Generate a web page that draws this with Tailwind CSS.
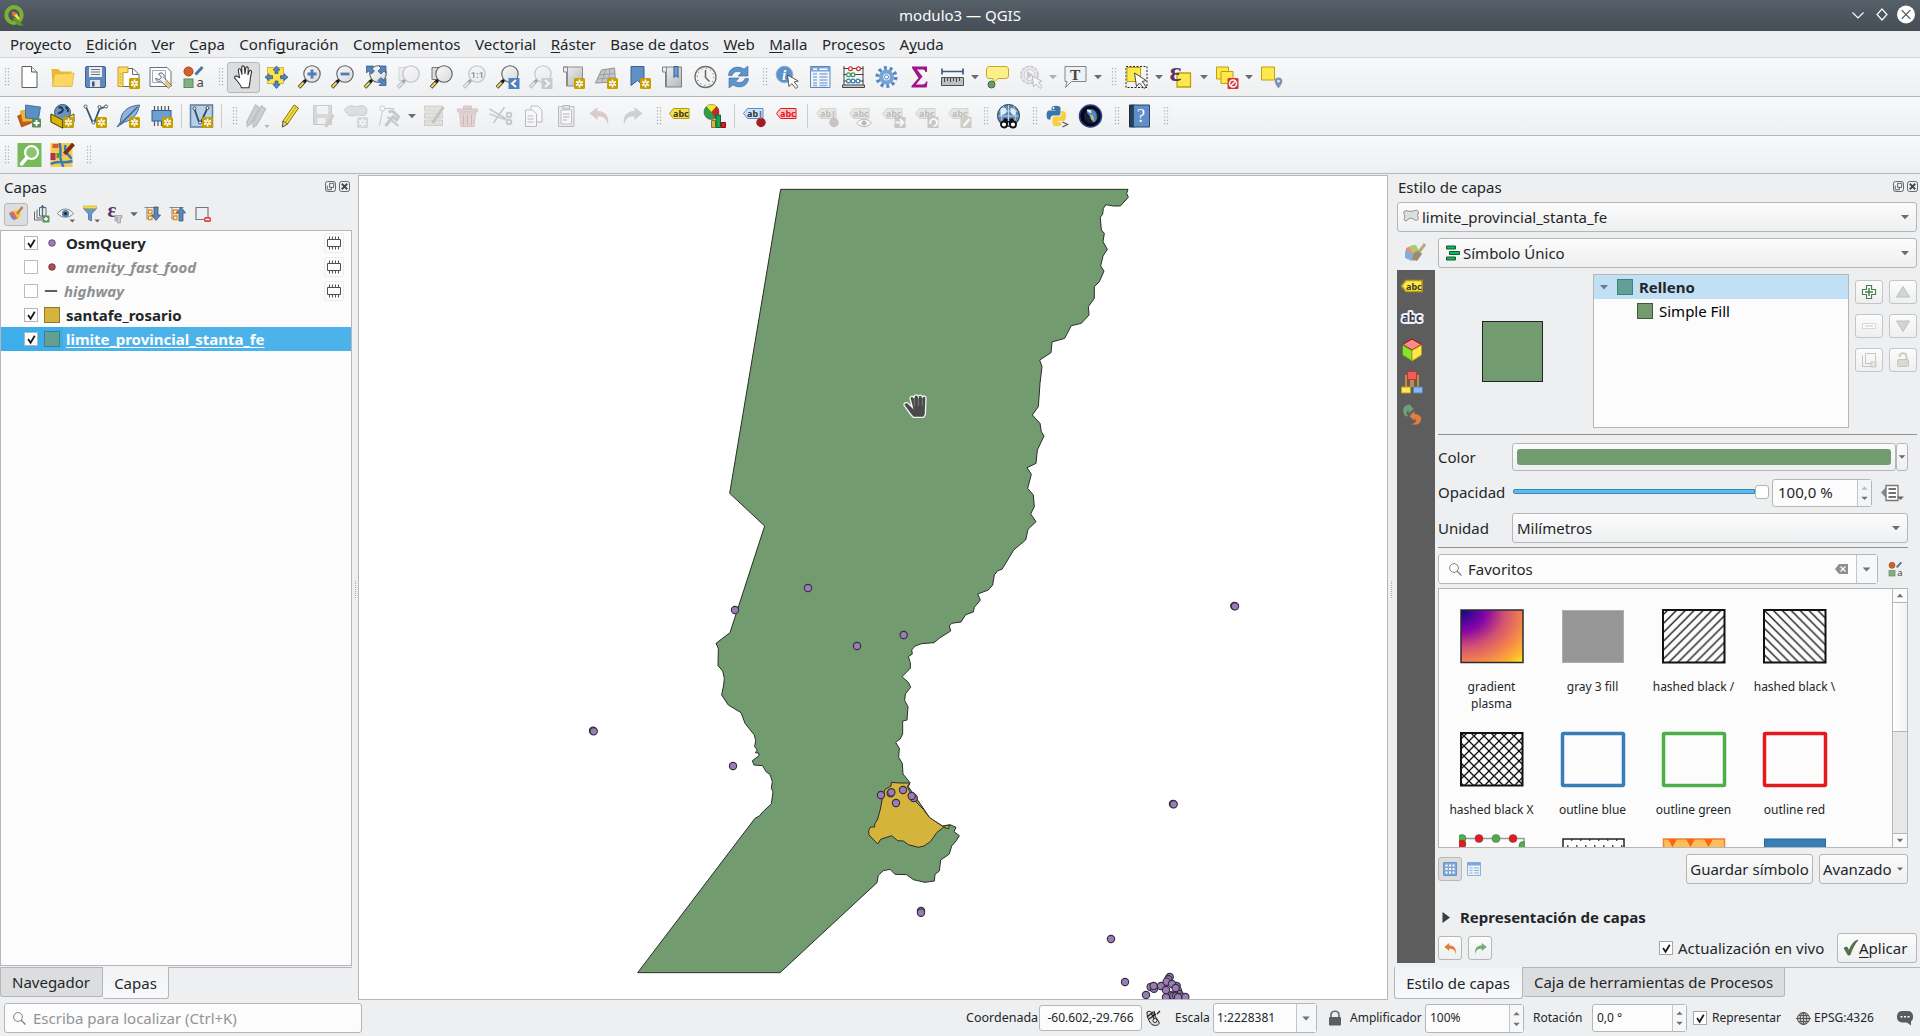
<!DOCTYPE html>
<html lang="es">
<head>
<meta charset="utf-8">
<title>modulo3 — QGIS</title>
<script src="https://cdn.jsdelivr.net/npm/@tailwindcss/browser@4"></script>
</head>
<body class="relative w-[1920px] h-[1036px] overflow-hidden flex flex-col bg-[#eeeff1] text-[#232629] text-[15px] leading-none font-['Noto_Sans',sans-serif] whitespace-nowrap">

<!-- shared glyphs -->
<svg class="absolute w-0 h-0">
  <defs>
    <linearGradient id="lens" x1="0" y1="0" x2="1" y2="1"><stop offset="0" stop-color="#fafafa"/><stop offset="1" stop-color="#d5d8da"/></linearGradient>
    <linearGradient id="page" x1="0" y1="0" x2="1" y2="1"><stop offset="0" stop-color="#f4f4f4"/><stop offset="1" stop-color="#b4b6b7"/></linearGradient>
    <radialGradient id="plasma" cx="0" cy="0" r="1.42"><stop offset="0" stop-color="#0d0887"/><stop offset=".28" stop-color="#8405a7"/><stop offset=".5" stop-color="#d35171"/><stop offset=".72" stop-color="#f48849"/><stop offset=".88" stop-color="#feb72d"/><stop offset="1" stop-color="#f0f921"/></radialGradient>
    <symbol id="grip" viewBox="0 0 16 24"><path d="M8.500 3v18M11.500 3v18" stroke="#a9abad" stroke-width="1.200" stroke-dasharray="1.200 2"/></symbol>
    <symbol id="down" viewBox="0 0 12 24"><path d="M2 10h8l-4 4.200z" fill="#6a6c6e"/></symbol>
    <symbol id="vline" viewBox="0 0 7 24"><path d="M3.500 0v24" stroke="#c9cbcc"/></symbol>
    <symbol id="new" viewBox="0 0 24 24"><rect x="12.500" y="13" width="11" height="11" rx="1.500" fill="#c4a000"/><path d="M18 14.600v7.800M14.600 16.500l6.800 4M14.600 20.500l6.800-4" stroke="#fff" stroke-width="1.700"/><circle cx="18" cy="18.500" r="1.100" fill="#c4a000"/></symbol>
    <symbol id="mag" viewBox="0 0 24 24"><path d="M7.500 16 1.500 22.500" stroke="#3a3a3a" stroke-width="3.600"/><path d="M6 17.600 1.800 22.200" stroke="#fcd94f" stroke-width="2"/><path d="M9 14.500 7 16.500" stroke="#111" stroke-width="3"/><circle cx="14.500" cy="9" r="8.200" fill="url(#lens)" stroke="#5a5c5d" stroke-width="1.100"/></symbol>
    <symbol id="tag" viewBox="0 0 24 24"><path d="M2 8.500 6 3.500H21.500V13.500H6z"/></symbol>
    <symbol id="chip" viewBox="0 0 20 20"><path d="M3.500 6.500h13v7h-13zM5.500 3.500v3M8.500 3.500v3M11.500 3.500v3M14.500 3.500v3M5.500 13.500v3M8.500 13.500v3M11.500 13.500v3M14.500 13.500v3" fill="none" stroke="#4d4f51"/></symbol>
    <symbol id="tick" viewBox="0 0 14 14"><path d="M3.300 6.500 6 10.500 10.500 3" fill="none" stroke="#17191b" stroke-width="1.900"/></symbol>
    <symbol id="styles" viewBox="0 0 24 24"><circle cx="6" cy="6.500" r="4.500" fill="#d2602d" stroke="#a54416"/><path d="M13 9.500 20 2" stroke="#47779f" stroke-width="3"/><rect x="1.500" y="14" width="9" height="8.500" fill="#82b085" stroke="#5c8a60"/></symbol>
    <symbol id="float" viewBox="0 0 12 12"><rect x=".5" y=".5" width="11" height="11" rx="2.500" fill="none" stroke="#56595b"/><path d="M5 2.500h4.500V7H5zM2.500 5v4.500H7V7" fill="none" stroke="#56595b"/></symbol>
    <symbol id="close" viewBox="0 0 12 12"><rect x=".5" y=".5" width="11" height="11" rx="2.500" fill="none" stroke="#56595b"/><path d="m3 3 6 6M9 3l-6 6" stroke="#46494b" stroke-width="2"/></symbol>
    <symbol id="undo" viewBox="0 0 24 24"><path d="M2 9.500 10 3v4c7 0 12 4 10.500 14C19 14 16 12.500 10 12.500V16z"/></symbol>
  </defs>
</svg>

<!-- title bar -->
<header class="h-[31px] shrink-0 flex items-center justify-between bg-linear-to-b from-[#566069] to-[#454d55] text-[#fcfcfc]">
  <svg class="w-[74px] h-[22px]" viewBox="0 0 74 22"><ellipse cx="14" cy="10" rx="7.700" ry="8" fill="none" stroke="#7cb032" stroke-width="4"/><path d="m15 12 8.500 8.500h-5L12.500 14z" fill="#5f9a2a"/><path d="m12 6.500 5 1.500-.5 4.500-4-1.500z" fill="#ee7c30"/><path d="m14.500 10.500 2.500-1.500 3 5-2.500.5z" fill="#f3e25b"/></svg>
  <div class="text-[15px]">modulo3 — QGIS</div>
  <svg class="w-[74px] h-[24px] -mt-px" viewBox="0 0 74 24" fill="none" stroke="#fcfcfc" stroke-width="1.200"><path d="m6.500 9.500 5.500 5.500 5.500-5.500M36 6l5 5.500-5 5.500-5-5.500z"/><circle cx="60" cy="11.500" r="9" fill="#fff" stroke="none"/><path d="m55.700 7.200 8.600 8.600M64.300 7.200l-8.600 8.600" stroke="#475057"/></svg>
</header>

<!-- menu bar -->
<nav class="h-[27px] shrink-0 flex items-center gap-[14.500px] pl-[10px] border-b border-[#d3d5d7] [&_u]:underline [&_u]:decoration-1 [&_u]:underline-offset-[2px] [&_u]:[text-decoration-skip-ink:none]">
  <span>Pro<u>y</u>ecto</span><span><u>E</u>dición</span><span><u>V</u>er</span><span><u>C</u>apa</span><span>Confi<u>g</u>uración</span><span>Co<u>m</u>plementos</span><span>Vect<u>o</u>rial</span><span><u>R</u>áster</span><span>Base de <u>d</u>atos</span><span><u>W</u>eb</span><span><u>M</u>alla</span><span>Pro<u>c</u>esos</span><span>A<u>y</u>uda</span>
</nav>

<!-- toolbar 1 -->
<div class="h-[39px] shrink-0 flex items-center border-b border-[#b4b6b9] bg-linear-to-b from-[#f8f9fb] to-[#eeeff1] [&>svg]:h-[24px] [&>svg]:w-[33px] [&>svg]:shrink-0 [&>svg]:overflow-visible">
  <svg class="-ml-[3px] max-w-[16px]" viewBox="0 0 16 24"><use href="#grip"/></svg>
  <svg viewBox="0 0 24 24"><path d="M4.500 1.500h9.500l5.500 5.500v15.500h-15z" fill="#fff" stroke="#5a5c5d"/><path d="M14 1.500V7h5.500" fill="#eee" stroke="#5a5c5d"/></svg>
  <svg viewBox="0 0 24 24"><path d="M1 4h7l2 2.500h11V21H2z" fill="#e8b83a"/><path d="m4 9 19.500-1-2 13.500H2z" fill="#fbd75f" stroke="#dcae3c" stroke-width=".7"/></svg>
  <svg viewBox="0 0 24 24"><rect x="2" y="1.500" width="20" height="21" rx="1.500" fill="#5f8abf" stroke="#3f5f8c"/><path d="M5.500 2h13v10h-13z" fill="#eceeef"/><path d="M7.500 4.500h9M7.500 7h9M7.500 9.500h9" stroke="#777"/><path d="M6.500 15h10v7h-10z" fill="#e4e5e6"/><path d="M8.500 16.500h2.500v5H8.500z" fill="#38557e"/></svg>
  <svg viewBox="0 0 24 24"><path d="M5.500 3.500h11l6 6v12h-17z" fill="#fff" stroke="#666"/><path d="M1.500 2h10v5.500h-5v14h-5z" fill="#f8dc6a" stroke="#c7a21b"/><path d="M16 3.500V9.500h6" fill="none" stroke="#666"/><path d="M3 9h2M3 12h2M3 15h2M3 18h2" stroke="#c7a21b"/><use href="#new"/></svg>
  <svg viewBox="0 0 24 24"><path d="M.5 2.500h17l4 4v15H.5z" fill="#fff" stroke="#6c6e70"/><path d="M3 5.500h13v12H3z" fill="none" stroke="#8fb2d8"/><path d="m9 9 3 3-2 2.500-4-1c1 3 3 3.500 5 2.500l8 7 3-2.500-7.500-8c1-2.500-1-5-4-4.500z" fill="#eee" stroke="#555" stroke-width=".9"/><path d="m15.500 16.500 5 5.500" stroke="#e8c64a" stroke-width="2.200"/></svg>
  <svg viewBox="0 0 24 24"><use href="#styles"/><text x="14" y="22" font-size="13" fill="#444">a</text></svg>
  <svg class="max-w-[16px]" viewBox="0 0 16 24"><use href="#grip"/></svg>
  <div class="w-[33px] h-[31px] rounded-[3px] border border-[#b6b8ba] bg-[#dcddde] flex items-center justify-center shrink-0"><svg class="size-[24px]" viewBox="0 0 24 24"><path d="M7.500 12.500 6.300 5.500c-.3-2 2-2.400 2.500-.6L10 9.500 9.700 2.500c0-2.200 2.500-2.200 2.700 0l.6 6.500.7-5.800c.4-2 2.700-1.600 2.500.4L15.900 10l1.200-3.600c.8-1.700 2.800-.9 2.400.8-.9 3.600-1.200 5.600-1.500 9.300-.3 3-.9 4-1 6.300H9.500c-.7-3.300-4.500-7-6.700-9.600-1-1.700 1-3 2.500-1.700z" fill="#fff" stroke="#333" stroke-width="1.100"/></svg></div>
  <svg viewBox="0 0 24 24"><rect x="3" y="2.500" width="16" height="16" fill="#fbe54d" stroke="#bfa21b" stroke-width=".7"/><path d="M12 1 8.500 5h2v3.500h3V5h2zM12 23.500l-3.500-4h2V16h3v3.500h2zM.5 12.200l4-3.500v2H8v3H4.500v2zM23.500 12.200l-4-3.500v2H16v3h3.500v2z" fill="#5485be" stroke="#2d527f" stroke-width=".7"/></svg>
  <svg viewBox="0 0 24 24"><use href="#mag"/><path d="M14.500 4.500v9M10 9h9" stroke="#4f7db5" stroke-width="2.800"/></svg>
  <svg viewBox="0 0 24 24"><use href="#mag"/><path d="M10 9h9" stroke="#4f7db5" stroke-width="2.800"/></svg>
  <svg viewBox="0 0 24 24"><use href="#mag"/><path d="M3 1h7L8 3l3 3-3 3-3-3-2 2zM22.500 1v7l-2-2-3 3-3-3 3-3-2-2zM22.500 20.500h-7l2-2-3-3 3-3 3 3 2-2z" fill="#5485be" stroke="#2d527f" stroke-width=".7"/></svg>
  <svg class="opacity-35 grayscale" viewBox="0 0 24 24"><path d="M2.500 2.500h10v13h-10z" fill="#e5dfa8" stroke="#999"/><use href="#mag"/></svg>
  <svg viewBox="0 0 24 24"><path d="M2.500 2.500h12v12h-12z" fill="#ddd" stroke="#777"/><use href="#mag"/></svg>
  <svg class="opacity-35 grayscale" viewBox="0 0 24 24"><use href="#mag"/><text x="8" y="12.500" font-size="9.500" font-weight="700">1:1</text></svg>
  <svg viewBox="0 0 24 24"><use href="#mag"/><path d="M13 13h11v11H13z" fill="#4f81bd"/><path d="m20.500 15-4 3.500 4 3.500" fill="none" stroke="#fff" stroke-width="2"/></svg>
  <svg class="opacity-35 grayscale" viewBox="0 0 24 24"><use href="#mag"/><path d="M13 13h11v11H13z" fill="#7d7f80"/><path d="m16.500 15 4 3.500-4 3.500" fill="none" stroke="#fff" stroke-width="2"/></svg>
  <svg viewBox="0 0 24 24"><path d="M2 2h19v19H5V7H2z" fill="url(#page)" stroke="#8a8c8d"/><path d="M2 2h4v19" fill="none" stroke="#8a8c8d"/><use href="#new"/></svg>
  <svg viewBox="0 0 24 24"><path d="m7 5 13-2 1 14-20 1z" fill="#c5c6c7" stroke="#8f9192"/><path d="M5 10l15.500-1.500M3 14l17.500-1.500M11 4.500 7.500 17.500M15.500 4l-1.500 13" stroke="#9c9e9f" fill="none"/><use href="#new"/></svg>
  <svg viewBox="0 0 24 24"><path d="M3.500 1.500h13v20L10 15.500l-6.500 5z" fill="#5f8fc6" stroke="#39618f"/><use href="#new"/></svg>
  <svg viewBox="0 0 24 24"><path d="M2 2h19v20H5V7H2z" fill="url(#page)" stroke="#7c7e80"/><path d="M6 2v20" stroke="#8a8c8d"/><path d="M13.500 1.500h4v11l-2-2-2 2z" fill="#6aa0d8" stroke="#2f5d91"/></svg>
  <svg viewBox="0 0 24 24"><circle cx="12" cy="12" r="10.500" fill="#f3f3f3" stroke="#6d6f70" stroke-width="1.300"/><circle cx="12" cy="12" r="8.300" fill="none" stroke="#555" stroke-dasharray="1 3.350"/><path d="M12 5v7.500l4 4" fill="none" stroke="#666" stroke-width="1.500"/></svg>
  <svg viewBox="0 0 24 24"><path d="M2 10.500C2.500 2.500 11 0 17.500 4L21.500 1v10h-10l3.500-3.500C11 5.500 7 6.500 5.500 10.500zM22 13.500c-.5 8-9 10.500-15.500 6.500L2.500 23V13h10L9 16.500c4 2 8 1 9.500-3z" fill="#5f93c9" stroke="#3c6ca1" stroke-width=".6"/></svg>
  <svg class="max-w-[16px]" viewBox="0 0 16 24"><use href="#grip"/></svg>
  <svg viewBox="0 0 24 24"><circle cx="9" cy="9.500" r="8.300" fill="#5c92ca" stroke="#8fb0d3"/><text x="6.500" y="15" font-size="15" font-style="italic" font-weight="700" font-family="Liberation Serif" fill="#fff">i</text><path d="m12 10 1.500 11.500 2.800-3 4 5 2.200-1.800-3.800-4.700 4-1z" fill="#fff" stroke="#444" stroke-width=".9"/></svg>
  <svg viewBox="0 0 24 24"><path d="M2 1.500h19.500v21H2z" fill="#eef4fb" stroke="#5d86b5"/><path d="M2 2h19.500v4.500H2z" fill="#7ba5d6"/><path d="M4.500 4.200h4M11 4.200h8" stroke="#fff" stroke-width="1.500"/><path d="M4.500 9h4M4.500 12h4M4.500 15h4M4.500 18h4M4.500 20.500h4M11 9h8M11 12h8M11 15h8M11 18h8M11 20.500h8" stroke="#8fb0d8" stroke-width="1.300"/></svg>
  <svg viewBox="0 0 24 24"><path d="M2.500 1v19M21.500 1v19M2 3.500h20M2 9.500h20M2 16h20" stroke="#444" fill="none"/><path d="M1 20h22v2.500H1z" fill="#ccc" stroke="#444"/><g fill="#fff" stroke-width="1.200"><g stroke="#c33"><circle cx="9" cy="3.800" r="1.900"/><circle cx="17" cy="3.800" r="1.900"/></g><g stroke="#3a9a4a"><circle cx="7" cy="9.700" r="1.900"/><circle cx="11.500" cy="9.700" r="1.900"/></g><g stroke="#357ab5"><circle cx="7" cy="16" r="1.900"/><circle cx="11.500" cy="16" r="1.900"/><circle cx="16.500" cy="16" r="1.900"/></g></g></svg>
  <svg viewBox="0 0 24 24"><circle cx="12" cy="12" r="9" fill="none" stroke="#5586c0" stroke-width="4" stroke-dasharray="2.830 2.830"/><circle cx="12" cy="12" r="5.500" fill="#dbe8f5" stroke="#76a3d6" stroke-width="4"/><circle cx="12" cy="12" r="2" fill="#fff" stroke="#5586c0"/></svg>
  <svg viewBox="0 0 24 24"><path d="M4.500 1.500h15V7H18c-.6-2-1.500-2.500-4-2.500H9.500l5.500 7-6.500 8h6c2.500 0 3.500-.7 4-3H20l-.8 6H4v-1.500L11 13 4.500 3z" fill="#a0148c"/></svg>
  <svg viewBox="0 0 24 24"><path d="M1.500 6.500h21M1.500 3.500v6M22.500 3.500v6" stroke="#3d5c7c" stroke-width="1.700"/><path d="M1 12.500h22v8H1z" fill="#bcbec0" stroke="#4e5052"/><path d="M4 13v4M7 13v3M10 13v4M13 13v3M16 13v4M19 13v3" stroke="#444"/></svg>
  <svg class="max-w-[12px]" viewBox="0 0 12 24"><use href="#down"/></svg>
  <svg viewBox="0 0 24 24"><path d="M4.500 1.500h15c3 0 3.500 1 3.500 3.500v5c0 3-1 3.500-3.500 3.500h-7L8 18l-.5-4.500h-3c-3 0-3.500-1-3.500-3.500V5c0-2.500 1-3.500 3.500-3.500z" fill="#fcee88" stroke="#c6a72b"/><circle cx="6" cy="19.500" r="3.500" fill="#6b9a6d" stroke="#3f6b41"/></svg>
  <svg class="opacity-35 grayscale" viewBox="0 0 24 24"><circle cx="11" cy="10" r="8.500" fill="#ddd" stroke="#888" stroke-width="2" stroke-dasharray="3.500 1"/><circle cx="11" cy="10" r="5.500" fill="#eee" stroke="#777"/><path d="m8.500 6 6 4-6 4z" fill="#777"/><path d="m14 11 1 11 2.500-3 4 4.500 2-1.500-3.500-4.700 3.500-.8z" fill="#fff" stroke="#555"/></svg>
  <svg class="max-w-[12px] opacity-50" viewBox="0 0 12 24"><use href="#down"/></svg>
  <svg viewBox="0 0 24 24"><path d="M1.500 1.500h21v15H8l-6 6 1.500-6h-2z" fill="#eef2f4" stroke="#7c8a90"/><text x="6.500" y="14.500" font-size="15.500" font-weight="700" font-family="Liberation Serif" fill="#444">T</text></svg>
  <svg class="max-w-[12px]" viewBox="0 0 12 24"><use href="#down"/></svg>
  <svg class="max-w-[16px]" viewBox="0 0 16 24"><use href="#grip"/></svg>
  <svg viewBox="0 0 24 24"><path d="M1.500 1.500h21v21h-21z" fill="none" stroke="#222" stroke-dasharray="2 1.500"/><path d="M2.500 2.500h13.500v14H2.500z" fill="#fce94f" stroke="#c4a000"/><path d="m10 8 2 13.500 3-3.500 4.500 5.500 2.200-1.800-4-5.200 4-1z" fill="#fff" stroke="#333" stroke-width=".9"/></svg>
  <svg class="max-w-[12px]" viewBox="0 0 12 24"><use href="#down"/></svg>
  <svg viewBox="0 0 24 24"><path d="M7.500 8h13.500v14H7.500z" fill="#fce94f" stroke="#c4a000" stroke-width="1.300"/><text x="0" y="15.500" font-size="28" font-weight="700" font-family="Liberation Serif" fill="#5c3566">ε</text></svg>
  <svg class="max-w-[12px]" viewBox="0 0 12 24"><use href="#down"/></svg>
  <svg viewBox="0 0 24 24"><path d="M2 2h12v12H2z" fill="#fce94f" stroke="#c4a000"/><path d="M6.500 6.500h12v12h-12z" fill="#fce94f" stroke="#c4a000"/><rect x="13" y="13" width="11" height="11" rx="1" fill="#d8383d"/><circle cx="18.500" cy="18.500" r="3.500" fill="none" stroke="#fff" stroke-width="1.500"/><path d="m16 21 5-5" stroke="#fff" stroke-width="1.500"/></svg>
  <svg class="max-w-[12px]" viewBox="0 0 12 24"><use href="#down"/></svg>
  <svg viewBox="0 0 24 24"><path d="M2 2h13v13H2z" fill="#fce94f" stroke="#c4a000"/><path d="M19 12.500a3.800 3.800 0 0 1 3.800 3.800c0 2.700-3.800 7-3.800 7s-3.800-4.300-3.800-7A3.800 3.800 0 0 1 19 12.500z" fill="#7896ad"/><circle cx="19" cy="16.200" r="1.400" fill="#dfe8ee"/></svg>
</div>

<!-- toolbar 2 -->
<div class="h-[39px] shrink-0 flex items-center border-b border-[#b4b6b9] bg-linear-to-b from-[#f8f9fb] to-[#eeeff1] [&>svg]:h-[24px] [&>svg]:w-[33px] [&>svg]:shrink-0 [&>svg]:overflow-visible">
  <svg class="-ml-[3px] max-w-[16px]" viewBox="0 0 16 24"><use href="#grip"/></svg>
  <svg viewBox="0 0 24 24"><path d="m0 12 12-5 2 12-10 4z" fill="#c35817" stroke="#98400a" stroke-width=".6"/><path d="m3 7 13-2 1 12-12 1z" fill="#edb92e" stroke="#b98c12" stroke-width=".6"/><path d="m8 1 15 2-2 12-13-1z" fill="#5b8dc7" stroke="#355f93" stroke-width=".8"/><rect x="14.500" y="14.500" width="9" height="9" rx="1" fill="#5a8c5a"/><path d="M19 16v6M16 19h6" stroke="#fff" stroke-width="1.800"/></svg>
  <svg viewBox="0 0 24 24"><circle cx="12" cy="8.500" r="8" fill="#6f94bb" stroke="#35567c"/><path d="M8 4c3-2 5 1 4 3s-4 1-4 3M15 3c2 1 3 3 2 5" fill="none" stroke="#1d3854" stroke-width="2"/><path d="m.5 10 11.500 6 11.500-6v8L12 24 .5 18z" fill="#fbf15a" stroke="#5e5212"/><path d="m.5 10 11.500 6v8L.5 18z" fill="#d9b400" stroke="#5e5212"/><use href="#new"/></svg>
  <svg viewBox="0 0 24 24"><path d="m3 4 6 14h2l5-13 5-2" fill="none" stroke="#2f5878" stroke-width="1.800"/><g fill="#fff" stroke="#555"><circle cx="2" cy="2.500" r="1.500"/><circle cx="10" cy="18.500" r="1.500"/><circle cx="16" cy="3" r="1.500"/><circle cx="22.500" cy="2.500" r="1.500"/></g><use href="#new"/></svg>
  <svg viewBox="0 0 24 24"><path d="M23 1C11 2 4 8 4 18L.5 23 8 18c8-2 13-7 15-17z" fill="#8fb3da" stroke="#40658f"/><path d="M21 3 4 20" stroke="#3a5f88" stroke-width="1.200"/><use href="#new"/></svg>
  <svg viewBox="0 0 24 24"><path d="M5 2v20M8.500 2v20M12 2v20M15.500 2v20M19 2v20" stroke="#555" stroke-width="1.200"/><rect x="2.500" y="6.500" width="19" height="10.500" fill="#6e9fd4" stroke="#2f5c92"/><use href="#new"/></svg>
  <svg class="max-w-[7px]" viewBox="0 0 7 24"><use href="#vline"/></svg>
  <svg viewBox="0 0 24 24"><rect x="1" y="1" width="22" height="22" fill="#b9cfe6" stroke="#5c7ea6" stroke-width="1.500"/><path d="m5 5 4.500 13h2L18 4" fill="none" stroke="#2f4f70" stroke-width="1.800"/><g fill="#fff" stroke="#444"><circle cx="5" cy="4.500" r="1.500"/><circle cx="10.500" cy="18.500" r="1.500"/><circle cx="18" cy="4" r="1.500"/></g><use href="#new"/></svg>
  <svg class="max-w-[7px]" viewBox="0 0 7 24"><use href="#vline"/></svg>
  <svg class="max-w-[16px]" viewBox="0 0 16 24"><use href="#grip"/></svg>
  <svg class="opacity-40" viewBox="0 0 24 24"><path d="M10 1 1.500 18l.5 4 3-2L14 4zM16 2 7.500 19l.5 4 3-2L20 5z" fill="#999" stroke="#777" stroke-width="1.600"/><path d="M19 21h5l-2.500 3z" fill="#555"/></svg>
  <svg viewBox="0 0 24 24"><path d="m15.500 1 4.500 3L9 20l-5 3 .5-6z" fill="#f7df3f" stroke="#7d6d1c"/><path d="m17.500 3-11 16" stroke="#b59c1d"/><path d="m4.500 17 4.500 3-5 3z" fill="#e9dcae" stroke="#4c4520" stroke-width=".8"/></svg>
  <svg class="opacity-30" viewBox="0 0 24 24"><path d="M2 1.500h18v19H2z" fill="#999" stroke="#666"/><path d="M5.500 2h11v8h-11zM6 14h8v6H6z" fill="#eee"/><path d="m22 11-8 12" stroke="#8a7070" stroke-width="3"/></svg>
  <svg class="opacity-30 grayscale" viewBox="0 0 24 24"><path d="M3 3c5-3 8 1 12-1s9 2 7 7-6 1-10 2-7 2-10-2-2-4 1-6z" fill="#aaa" stroke="#666"/><use href="#new"/></svg>
  <svg class="opacity-35" viewBox="0 0 24 24"><path d="M5 6 2 22M7 4.500h10" stroke="#777" fill="none"/><circle cx="5" cy="4.500" r="2.500" fill="#fff" stroke="#777"/><path d="m10 13 11 9" stroke="#777" stroke-width="2"/><path d="m11 8 4-1 6 6-2 3-4-4M16 12 8 22" stroke="#777" stroke-width="3" fill="none"/></svg>
  <svg class="max-w-[12px]" viewBox="0 0 12 24"><use href="#down"/></svg>
  <svg class="opacity-30" viewBox="0 0 24 24"><path d="M2 2h18v5H2zM2 9h18v5H2zM2 16h18v5.500H2z" fill="#bbb78e" stroke="#777"/><path d="M21 3 10 19" stroke="#555" stroke-width="3"/></svg>
  <svg class="opacity-35" viewBox="0 0 24 24"><path d="M4 9h16l-1.500 13.500h-13z" fill="#c99" stroke="#a66"/><path d="M8 11v10M12 11v10M16 11v10" stroke="#844"/><path d="M2 5h20v3H2zM8 2h8v3H8z" fill="#b99" stroke="#966"/></svg>
  <svg class="opacity-40" viewBox="0 0 24 24"><path d="m1 5 17 10M5 19 16 3M1 10l17 6" stroke="#8c8c8c" stroke-width="1.800" fill="none"/><circle cx="20.500" cy="11" r="2.300" fill="none" stroke="#888" stroke-width="2"/><circle cx="20.500" cy="18" r="2.300" fill="none" stroke="#888" stroke-width="2"/></svg>
  <svg class="opacity-35" viewBox="0 0 24 24"><path d="M9.500 2h7l4 4v12h-11z" fill="#fff" stroke="#555"/><path d="M4 6h7l4 4v12.500H4z" fill="#fff" stroke="#555"/><path d="M6 12h6M6 15h6M6 18h6" stroke="#555"/></svg>
  <svg class="opacity-40" viewBox="0 0 24 24"><path d="M4 2.500h15.500v20H4z" fill="#ddd" stroke="#666"/><path d="M6.500 6H17v14H6.500z" fill="#fff" stroke="#777"/><path d="M8.500 1.500h6.500V5H8.500zM8.500 10h6.500M8.500 13h6.500M8.500 16h4" fill="#ccc" stroke="#555"/></svg>
  <svg class="opacity-40" viewBox="0 0 24 24"><use href="#undo" fill="#b88c8c"/></svg>
  <svg class="opacity-40 -scale-x-100" viewBox="0 0 24 24"><use href="#undo" fill="#8fa09a"/></svg>
  <svg class="max-w-[16px]" viewBox="0 0 16 24"><use href="#grip"/></svg>
  <svg viewBox="0 0 24 24"><use href="#tag" x="-2" y="1" fill="#f5e04c" stroke="#b89b12"/><text x="3.500" y="13" font-size="9" font-weight="700" fill="#3c3a20">abc</text></svg>
  <svg viewBox="0 0 24 24"><circle cx="9" cy="8" r="7.500" fill="#2f9e44" stroke="#444" stroke-width=".6"/><path d="M9 8 4 2.500A7.500 7.500 0 0 1 14 2.500z" fill="#f7e52d"/><path d="M9 8l5-5.500A7.500 7.500 0 0 1 13 14.500z" fill="#c62828"/><path d="M9 16.500h4v7H9z" fill="#e7b416" stroke="#866"/><path d="M13.500 11h4.500v12.500h-4.500z" fill="#1fa049" stroke="#064"/><path d="M18.500 18.500h4.500v5h-4.500z" fill="#c22" stroke="#811"/></svg>
  <svg class="max-w-[7px]" viewBox="0 0 7 24"><use href="#vline"/></svg>
  <svg viewBox="0 0 24 24"><use href="#tag" x="-1" y="1" fill="#cfe3fa" stroke="#4c8ed9"/><text x="4.500" y="13" font-size="9" font-weight="700" fill="#333">ab</text><circle cx="18.500" cy="18.500" r="4.700" fill="#a31c26"/><path d="M18 7v8" stroke="#777" stroke-width="1.600"/></svg>
  <svg viewBox="0 0 24 24"><use href="#tag" x="-1" y="1" fill="#ffc9c9" stroke="#e8141c"/><text x="4.500" y="13" font-size="9" font-weight="700" fill="#e8141c">abc</text></svg>
  <svg class="max-w-[7px]" viewBox="0 0 7 24"><use href="#vline"/></svg>
  <svg class="opacity-40" viewBox="0 0 24 24"><use href="#tag" x="-1" y="1" fill="#d2d1c2" stroke="#a5a495"/><text x="4.500" y="13" font-size="9" font-weight="700" fill="#666">ab</text><circle cx="18.500" cy="18.500" r="4.700" fill="#8c7c7c"/><path d="M18 7v8" stroke="#777" stroke-width="1.600"/></svg>
  <svg class="opacity-40" viewBox="0 0 24 24"><use href="#tag" x="-1" y="1" fill="#d2d1c2" stroke="#a5a495"/><text x="4.500" y="13" font-size="9" font-weight="700" fill="#666">abc</text><path d="M8 19c4-5 11-5 15 0-4 5-11 5-15 0z" fill="#fff" stroke="#666"/><circle cx="15.500" cy="19" r="2.500" fill="#666"/></svg>
  <svg class="opacity-40" viewBox="0 0 24 24"><use href="#tag" x="-1" y="1" fill="#d2d1c2" stroke="#a5a495"/><text x="4.500" y="13" font-size="9" font-weight="700" fill="#666">abc</text><path d="M13 13h11v11H13z" fill="#888"/><path d="M14 18.500h8M18.500 15l3.500 3.500-3.500 3.500" fill="none" stroke="#fff" stroke-width="2"/></svg>
  <svg class="opacity-40" viewBox="0 0 24 24"><use href="#tag" x="-1" y="1" fill="#d2d1c2" stroke="#a5a495"/><text x="4.500" y="13" font-size="9" font-weight="700" fill="#666">abc</text><path d="M13 13h11v11H13z" fill="#888"/><path d="M16 20a3.500 3.500 0 1 1 3 2" fill="none" stroke="#fff" stroke-width="2"/></svg>
  <svg class="opacity-40" viewBox="0 0 24 24"><use href="#tag" x="-1" y="1" fill="#d2d1c2" stroke="#a5a495"/><text x="4.500" y="13" font-size="9" font-weight="700" fill="#666">abc</text><path d="M13 13h11v11H13z" fill="#999987"/><path d="m22 15-6 7" fill="none" stroke="#fff" stroke-width="2.500"/></svg>
  <svg class="max-w-[16px]" viewBox="0 0 16 24"><use href="#grip"/></svg>
  <svg viewBox="0 0 24 24"><circle cx="12" cy="11.500" r="11" fill="#5c87b5" stroke="#1f3e5f"/><path d="M3 7h18M2 12h20M12 1v20M7 2c-3 6-3 12 0 18M17 2c3 6 3 12 0 18" stroke="#c9d9e8" fill="none" stroke-width=".9"/><path d="M4 5c4-3 7 0 6 3s-5 2-6 4zM14 4c4 0 6 3 5 6s-4 0-5-2z" fill="#e4ecf3"/><path d="m8 14-4 7h6l2-3 2 3h6l-4-7-3 1v2h-2v-2z" fill="#111"/><circle cx="7.500" cy="20.500" r="3" fill="#fff" stroke="#111" stroke-width="1.800"/><circle cx="16.500" cy="20.500" r="3" fill="#fff" stroke="#111" stroke-width="1.800"/></svg>
  <svg class="max-w-[16px]" viewBox="0 0 16 24"><use href="#grip"/></svg>
  <svg viewBox="0 0 24 24"><path d="M6 6V4c0-3 9-3 9 0v5c0 2-1 2.500-3 2.500H8c-2 0-3 1-3 4H3c-2.500 0-2.500-9 0-9h7V6z" fill="#3b76a8"/><path d="M16 7h2c3.500 0 3.500 10 0 10h-6v1h4v2c0 3-9 3-9 0v-5c0-2 1-2.500 3-2.500h3c2 0 3-1 3-3z" fill="#f8cf40"/><circle cx="8" cy="4" r="1" fill="#fff"/><path d="m17 18 5 2.500-5 2.500" fill="none" stroke="#555" stroke-width="1.300"/></svg>
  <svg viewBox="0 0 24 24"><circle cx="12" cy="12" r="11" fill="#07080f" stroke="#2d3e8c" stroke-width="1.500"/><circle cx="13" cy="12" r="7.500" fill="#16233f"/><path d="M9 6c4-2 8 0 9 4s0 7-2 8-3-3-4-5-5-4-3-7z" fill="#4c83c2"/><path d="M12 10c3 1 4 4 3 7-2 0-4-4-3-7z" fill="#c9b96d"/><path d="M8 6c2-1 5 0 5 2s-3 1-5-2z" fill="#e3ecf4"/></svg>
  <svg class="max-w-[16px]" viewBox="0 0 16 24"><use href="#grip"/></svg>
  <svg viewBox="0 0 24 24"><path d="M2 1h5v22H2z" fill="#273f57" stroke="#1c2d3e"/><path d="M6 1h16v22H6z" fill="#5f8fc9" stroke="#2c4764"/><text x="9.500" y="18" font-size="18" font-family="Liberation Serif" fill="#fff">?</text></svg>
  <svg class="max-w-[16px]" viewBox="0 0 16 24"><use href="#grip"/></svg>
</div>

<!-- toolbar 3 -->
<div class="h-[38px] shrink-0 flex items-center border-b border-[#b4b6b9] bg-linear-to-b from-[#f8f9fb] to-[#eeeff1] [&>svg]:h-[24px] [&>svg]:w-[33px] [&>svg]:shrink-0">
  <svg class="-ml-[3px] max-w-[16px]" viewBox="0 0 16 24"><use href="#grip"/></svg>
  <svg viewBox="0 0 24 24"><path d="M0 0h24v24H0z" fill="#78b95a"/><circle cx="14" cy="9.500" r="6.500" fill="#8cc572" stroke="#fff" stroke-width="2.200"/><path d="M9.500 14.500 4 21" stroke="#fff" stroke-width="3.500" stroke-linecap="round"/></svg>
  <svg viewBox="0 0 24 24"><path d="M0 0h22v24H0z" fill="#f2ce4a"/><path d="M0 10h5v7H0z" fill="#b0305a"/><path d="M2 1h6v4H2z" fill="#e0552c"/><path d="M9 0c3 8-2 14 4 24M0 21c8-4 14 0 22-3M15 2c-2 8 4 10 6 14" stroke="#3b76c4" stroke-width="2.500" fill="none"/><path d="M6 10h3v5H6z" fill="#3f9e4a"/><path d="m23 1-9 10" stroke="#7c2f12" stroke-width="4"/><path d="m13 10-3 5 5-3z" fill="#e8b36f"/></svg>
  <svg class="max-w-[16px]" viewBox="0 0 16 24"><use href="#grip"/></svg>
</div>

<main class="h-[826px] shrink-0 flex">
  <!-- layers dock -->
  <section class="w-[352px] shrink-0 flex flex-col">
    <div class="h-[27px] flex items-center justify-between pl-[4px] pr-[2px]">
      <span>Capas</span>
      <div class="flex gap-[3px] -mt-[2px]"><svg class="size-[11px]" viewBox="0 0 12 12"><use href="#float"/></svg><svg class="size-[11px]" viewBox="0 0 12 12"><use href="#close"/></svg></div>
    </div>
    <div class="h-[29px] flex items-center pl-[4px] pb-[3px] [&>svg]:h-[18px] [&>svg]:w-[25px] [&>svg]:shrink-0 [&>svg]:overflow-visible">
      <div class="w-[24px] h-[23px] rounded-[3px] border border-[#b6b8ba] bg-[#dcddde] flex items-center justify-center shrink-0"><svg class="size-[16px]" viewBox="0 0 16 16"><path d="m1 7 4-2 6 7-5 2z" fill="#e2685b"/><path d="m1 8 3 5 3 1-2-5z" fill="#5d93cf"/><path d="m5 5 4-1 4 5-3 4z" fill="#f3c53c"/><path d="m9 8 5.500-7" stroke="#c07a2e" stroke-width="2.300"/></svg></div>
      <svg viewBox="0 0 18 18"><path d="M3 6.500v8.500h8M5.500 4.500v8.500h8M8 2.500h6.500v8.500H8z" fill="none" stroke="#666"/><path d="M11 0v12M9 3l2-2 2 2" stroke="#3f6f99" stroke-width="1.300" fill="none"/><rect x="11" y="10.500" width="7" height="7" rx="1" fill="#5e9160"/><path d="M14.500 12v4M12.500 14h4" stroke="#fff" stroke-width="1.300"/></svg>
      <svg viewBox="0 0 18 18"><path d="M1 8.500c4-6 12-6 16 0-4 5-12 5-16 0z" fill="#eee" stroke="#888"/><circle cx="9" cy="8.500" r="3.500" fill="#4a7fb0"/><circle cx="9" cy="8.500" r="1.500" fill="#222"/><path d="M13 14.500h5.500l-2.700 3z" fill="#666"/></svg>
      <svg viewBox="0 0 18 18"><path d="M1.500 3h14L10 9v7l-3-1.500V9z" fill="#6797cc" stroke="#4473a5" stroke-width=".8"/><path d="M2 1h13v2.500H2z" fill="#f7dc4a" stroke="#c8a91d" stroke-width=".6"/><path d="M13 14.500h5.500l-2.700 3z" fill="#666"/></svg>
      <svg viewBox="0 0 18 18"><text x="1" y="11.500" font-size="21" font-weight="700" font-family="Liberation Serif" fill="#5c3566">ε</text><path d="M8.500 10.500h7v2.500h-1.500V18h-3v-6h-1v4h-1.500z" fill="#ccc" stroke="#999" stroke-width=".7"/></svg>
      <svg class="max-w-[12px]" viewBox="0 0 12 24"><path d="M1 9.500h10L6 15z" fill="#666"/></svg>
      <svg viewBox="0 0 18 18"><path d="M1 2.500h14M3.500 3v11.500M4 7h4M4 13h4" stroke="#888" fill="none"/><path d="M5 5h3.500v3.500H5zM5 11h3.500v3.500H5z" fill="#fff" stroke="#e88d1a" stroke-width="1.300"/><path d="M10.500 2h4v8h2.500L12.500 15.500 8 10h2.500z" fill="#5a86b8" stroke="#36587f" stroke-width=".8"/></svg>
      <svg viewBox="0 0 18 18"><path d="M1 2.500h14M3.500 3v11.500M4 7h4M4 13h4" stroke="#888" fill="none"/><path d="M5 5h3.500v3.500H5zM5 11h3.500v3.500H5z" fill="#fff" stroke="#e88d1a" stroke-width="1.300"/><path d="M10.500 16h4V8h2.500L12.500 2 8 8h2.500z" fill="#5a86b8" stroke="#36587f" stroke-width=".8"/></svg>
      <svg viewBox="0 0 18 18"><path d="M2.500 2.500h12v12h-12z" fill="none" stroke="#777" stroke-width="1.200"/><rect x="10.500" y="12" width="7" height="5" rx="1.500" fill="#e2474e"/><path d="M12 14.500h4" stroke="#fff" stroke-width="1.300"/></svg>
    </div>
    <div class="h-[736px] border border-[#b4b6b9] bg-[#fcfcfc] font-bold [&>div]:h-[24px] [&>div]:flex [&>div]:items-center [&>div]:pl-[23px]">
      <div><span class="size-[14px] border border-[#b4b6b8] bg-white"><svg class="size-[13px]"><use href="#tick"/></svg></span><svg class="size-[16px] ml-[6px]" viewBox="0 0 16 16"><circle cx="8" cy="8" r="3.300" fill="#987db7" stroke="#4d4558" stroke-width=".8"/></svg><span class="ml-[6px] grow">OsmQuery</span><span class="size-[20px] mr-[7px] rounded-[3px] border border-[#ececec] flex items-center justify-center"><svg class="size-[20px] shrink-0"><use href="#chip"/></svg></span></div>
      <div><span class="size-[14px] border border-[#b9bbbd] bg-white"></span><svg class="size-[16px] ml-[6px]" viewBox="0 0 16 16"><circle cx="8" cy="8" r="3.300" fill="#b7484b" stroke="#58393a" stroke-width=".8"/></svg><span class="ml-[6px] grow italic text-[#8e9091]">amenity_fast_food</span><span class="size-[20px] mr-[7px] rounded-[3px] border border-[#ececec] flex items-center justify-center"><svg class="size-[20px] shrink-0"><use href="#chip"/></svg></span></div>
      <div><span class="size-[14px] border border-[#b9bbbd] bg-white"></span><svg class="size-[14px] ml-[6px]" viewBox="0 0 14 16"><path d="M0 8h14" stroke="#333" stroke-width="1.800"/></svg><span class="ml-[6px] grow italic text-[#8e9091]">highway</span><span class="size-[20px] mr-[7px] rounded-[3px] border border-[#ececec] flex items-center justify-center"><svg class="size-[20px] shrink-0"><use href="#chip"/></svg></span></div>
      <div><span class="size-[14px] border border-[#b4b6b8] bg-white"><svg class="size-[13px]"><use href="#tick"/></svg></span><span class="size-[16px] ml-[6px] bg-[#d5b43c] border border-[#8f7a2c]"></span><span class="ml-[6px]">santafe_rosario</span></div>
      <div class="bg-[#3daee9] text-[#fcfcfc]"><span class="size-[14px] border border-[#b4b6b8] bg-white"><svg class="size-[13px]"><use href="#tick"/></svg></span><span class="size-[16px] ml-[6px] bg-[#629f94] border border-[#3f7f80]"></span><span class="ml-[3px] pl-[3px] grow h-full flex items-center bg-[#4cb3ea] underline underline-offset-[2px] decoration-1 [text-decoration-skip-ink:none]">limite_provincial_stanta_fe</span></div>
    </div>
    <div class="mt-px h-[32px] flex items-start border-t border-[#b4b6b9]">
      <div class="w-[103px] h-[29px] flex items-center justify-center pr-px rounded-b-[3px] border border-t-0 border-[#b4b6b9] bg-[#dcddde]">Navegador</div>
      <div class="-mt-px w-[66px] h-[32px] flex items-center justify-center pt-px rounded-b-[3px] border border-t-0 border-l-0 border-[#b4b6b9] bg-linear-to-b from-[#f1f2f3] to-[#f8f9fb]">Capas</div>
    </div>
  </section>

  <div class="w-[6px] shrink-0 flex flex-col items-center pt-[407px]"><span class="h-[17px] border-l border-dotted border-[#a9abad]"></span></div>

  <!-- map canvas -->
  <section class="mt-px w-[1030px] h-[825px] shrink-0 border border-[#b4b6b9] bg-white">
    <svg class="w-[1028px] h-[823px]" viewBox="-723 -1182 3084 2469">
      <g stroke="#2b2d2b" stroke-width="3" stroke-linejoin="round">
        <path fill="#729b6f" d="M542-1142H1584L1580-1130 1585-1118 1561-1092 1540-1092 1518-1096 1510-1085 1508-1068 1501-1058 1504-1020 1513-1010 1509-985 1522-962 1509-942 1502-912 1512-897 1498-865 1483-850 1483-815 1465-790 1467-765 1444-740 1414-733 1394-695 1356-684 1353-652 1319-630 1326-610 1320-560 1315-490 1297-465 1320-440 1324-415 1332-402 1312-360 1308-320 1281-307 1294-287 1283-245 1300-225 1303-190 1292-168 1308-145 1284-122 1277-90 1241-60 1206-2 1193 2 1183 15 1178 45 1165 60 1133 72 1141 90 1123 112 1120 126 1097 134 1083 156 1055 160 1048 168 1052 183 1020 203 1002 218 965 221 945 228 935 240 937 252 925 260 931 278 931 295 906 320 925 337 932 352 916 372 914 392 924 410 921 450 908 453 908 492 900 507 887 517 898 535 896 562 907 580 909 612 930 638 925 650 960 700 990 745 1028 768 1050 764 1068 772 1062 785 1078 797 1069 812 1055 828 1048 852 1022 870 1018 903 1005 913 1003 933 975 937 940 929 920 914 885 913 870 898 850 902 835 916 831 938 540 1208H113L465 745 478 738 490 724 514 702 519 665 514 655 517 635 510 613 498 605 488 587 462 585 457 572 477 557 476 549 466 548 472 540 464 530 467 512 463 495 435 460 423 428 385 405 365 375 371 345 373 325 368 303 354 287 355 235 348 220 390 188 494-132 389-230z"/>
        <path fill="#d5b43c" d="M874 637 900 639H929L922 650 932 670 952 700 970 718 988 742 1028 769 1048 766 1046 776 1030 772 1010 788 992 814 972 828 955 832 925 824 910 813 893 812 875 797 842 808 833 822 807 795 806 782 811 771 824 771 824 762 832 750 841 718 847 685 855 658 873 648z"/>
      </g>
      <g fill="#987db7" stroke="#342d3c" stroke-width="3.300">
        <circle cx="624" cy="54" r="11"/><circle cx="405" cy="120" r="11"/><circle cx="771" cy="228" r="11"/><circle cx="911" cy="195" r="11"/><circle cx="399" cy="588" r="11"/><circle cx="843" cy="675" r="11"/><circle cx="872" cy="670" r="11"/><circle cx="874" cy="667" r="11"/><circle cx="909" cy="660" r="11"/><circle cx="941" cy="684" r="11"/><circle cx="935" cy="678" r="11"/><circle cx="888" cy="699" r="11"/><circle cx="963" cy="1023" r="11"/><circle cx="963" cy="1028" r="11"/>
        <circle cx="-21" cy="482" r="11"/><circle cx="-19" cy="484" r="11"/><circle cx="1903" cy="108" r="11"/><circle cx="1905" cy="109" r="11"/><circle cx="1719" cy="702" r="11"/><circle cx="1721" cy="703" r="11"/><circle cx="1533" cy="1107" r="11"/><circle cx="1575" cy="1236" r="11"/>
        <circle cx="1638" cy="1275" r="11"/><circle cx="1652" cy="1251" r="11"/><circle cx="1662" cy="1256" r="11"/><circle cx="1661" cy="1248" r="11"/><circle cx="1683" cy="1248" r="11"/><circle cx="1709" cy="1221" r="11"/><circle cx="1705" cy="1228" r="11"/><circle cx="1730" cy="1248" r="11"/><circle cx="1700" cy="1235" r="11"/><circle cx="1734" cy="1262" r="11"/><circle cx="1716" cy="1242" r="11"/><circle cx="1698" cy="1260" r="11"/><circle cx="1738" cy="1272" r="11"/><circle cx="1727" cy="1254" r="11"/><circle cx="1714" cy="1276" r="11"/><circle cx="1720" cy="1278" r="11"/><circle cx="1744" cy="1280" r="11"/><circle cx="1698" cy="1282" r="11"/><circle cx="1728" cy="1278" r="11"/><circle cx="1756" cy="1281" r="11"/><circle cx="1734" cy="1282" r="11"/>
      </g>
      <g transform="translate(-13 0)">
        <path d="M926-493c-5-8 8-13 14-5l10 10-7-27c0-8 9-8 12-1v-4c2-7 11-7 13 0 2-7 11-6 12 1 4-5 11-3 11 3l-2 50-5 8h-31l-9-10z" fill="#4a4a4a" stroke="#f4f4f4" stroke-width="4"/>
        <path d="M956-515v24M968-516v24M980-514v22" stroke="#999" stroke-width="2"/>
      </g>
    </svg>
  </section>

  <div class="w-[6px] shrink-0 flex flex-col items-center pt-[407px]"><span class="h-[17px] border-l border-dotted border-[#a9abad]"></span></div>

  <!-- styling dock -->
  <section class="w-[526px] shrink-0 flex flex-col">
    <div class="h-[28px] flex items-center justify-between pl-[4px] pr-[2px] pb-[2px]">
      <span>Estilo de capas</span>
      <div class="flex gap-[3px] -mt-px"><svg class="size-[11px]" viewBox="0 0 12 12"><use href="#float"/></svg><svg class="size-[11px]" viewBox="0 0 12 12"><use href="#close"/></svg></div>
    </div>
    <div class="ml-[3px] w-[520px] h-[30px] flex items-center pl-[5px] pr-[5px] rounded-[3px] border border-[#b4b6b8] bg-linear-to-b from-[#fcfcfc] to-[#eeeff0]">
      <svg class="size-[16px] -mt-[2px]" viewBox="0 0 16 16"><path d="M1 3.500C3 1.500 6 4 9 3.300s5.500-2 6.300.2-1.800 3.500-.3 5.500-1 4-3 3-3-2.500-5.500-1.500-2.500 3-4.500 2S2 10 1.800 8 0 5 1 3.500z" fill="#dcddde" stroke="#8c8e90"/></svg>
      <span class="ml-[3px] grow">limite_provincial_stanta_fe</span><svg class="w-[12px] h-[24px]"><use href="#down"/></svg>
    </div>
    <div class="mt-[6px] ml-[3px] h-[725px] flex">
      <!-- page selector -->
      <div class="w-[38px] shrink-0 flex flex-col">
        <div class="h-[32px] pl-[7px] pt-[5px]"><svg class="w-[22px] h-[20px]" viewBox="0 0 22 20"><path d="m2 5 8-3 6 10-6 6-9-4z" fill="#e88"/><path d="M1 8v7l7 3 1-7z" fill="#7fb0dc"/><path d="m5 3 7-1 3 6-7 2z" fill="#a8cc70"/><path d="m10 10 5-3 3 4-5 7-5-2z" fill="#9b8c72"/><path d="m15 9 6-8" stroke="#b9ab80" stroke-width="3"/></svg></div>
        <div class="grow bg-[#5d5d5d] pl-[3px] pt-[4px] flex flex-col gap-[8px] [&>svg]:size-[24px]">
          <svg viewBox="0 0 24 24"><path d="M1.500 12 6 6.500h16v11H6z" fill="#fbe94f" stroke="#b89b12" stroke-width="1.500"/><text x="6" y="15.500" font-size="9" font-weight="700" fill="#3c3a20">abc</text></svg>
          <svg viewBox="0 0 24 24"><text x="2" y="16" font-size="11.500" font-weight="700" fill="#333" stroke="#eef0ff" stroke-width="4" stroke-linejoin="round" paint-order="stroke" textLength="20">abc</text></svg>
          <svg viewBox="0 0 24 24"><path d="m12 1 9.500 5.500L12 12 2.500 6.500z" fill="#f88b8b" stroke="#a40000"/><path d="M2.500 7 12 12.500v10.500l-9.500-6z" fill="#8ae234" stroke="#4e9a06"/><path d="M21.500 7 12 12.500v10.500l9.500-6z" fill="#fce94f" stroke="#c4a000"/></svg>
          <svg viewBox="0 0 24 24"><path d="M6 17V6h5v11M18 17V6h-5v11" stroke="#c98a3c" stroke-width="2" fill="none"/><path d="M7.500 1.500h9v8h-9z" fill="#ef5e5e" stroke="#b33"/><path d="M1.500 17h9v6h-9z" fill="#fde566" stroke="#c4a000"/><path d="M13.500 17h9v6h-9z" fill="#8ab8ee" stroke="#4f83c0"/></svg>
          <svg viewBox="0 0 24 24"><path d="M8.500 3C4 3 1.500 7.500 4.500 13.500 5 14 8 15 8 14c-2-3-1.500-5 .5-6v3.500l5-4.500L9.500 2z" fill="#6da179"/><path d="m9.500 14 5-5v3c7 0 9 6 4 10-3 1-5 1-7 0 4 0 6-4 3-5.500v2.500z" fill="#e67c3b"/></svg>
        </div>
      </div>
      <!-- symbol properties -->
      <div class="ml-[3px] w-[480px] flex flex-col">
        <div class="w-[479px] h-[30px] flex items-center pl-[7px] pr-[5px] rounded-[3px] border border-[#b4b6b8] bg-linear-to-b from-[#fcfcfc] to-[#eeeff0]">
          <svg class="w-[14px] h-[16px] -mt-px" viewBox="0 0 14 16"><path d="M.5 1h9v3h-9zM3.500 6.500h10v3h-10zM.5 12h9v3h-9z" fill="#14b45a" stroke="#0b5d33"/></svg>
          <span class="ml-[3px] grow">Símbolo Único</span><svg class="w-[12px] h-[24px]"><use href="#down"/></svg>
        </div>
        <div class="mt-[6px] h-[155px] flex">
          <div class="w-[155px] pl-[44px] pt-[47px]"><div class="size-[61px] bg-[#729b6f] border border-[#232323]"></div></div>
          <div class="w-[256px] h-[154px] border border-[#b4b6b9] bg-[#fcfcfc]">
            <div class="h-[24px] flex items-center bg-[#c2e0f5] font-bold pl-[5px]"><svg class="w-[10px] h-[24px]" viewBox="0 0 10 24"><path d="M1 10h8l-4 4.500z" fill="#6a7c88"/></svg><span class="ml-[8px] size-[16px] bg-[#629f94] border border-[#3f7f80]"></span><span class="ml-[6px]">Relleno</span></div>
            <div class="h-[24px] flex items-center pl-[43px] text-black"><span class="size-[16px] bg-[#729b6f] border border-[#44583f]"></span><span class="ml-[6px]">Simple Fill</span></div>
          </div>
          <div class="ml-[6px] pt-[6px] grid grid-cols-[28px_28px] auto-rows-[24px] gap-x-[6px] gap-y-[10px] [&>div]:flex [&>div]:items-center [&>div]:justify-center [&>div]:rounded-[3px] [&>div]:border [&>div]:border-[#c3c5c7] [&>div]:bg-linear-to-b [&>div]:from-[#fcfcfc] [&>div]:to-[#eeeff0] [&_svg]:size-[16px]">
            <div><svg viewBox="0 0 16 16"><path d="M5.500 1.500h5v4h4v5h-4v4h-5v-4h-4v-5h4z" fill="#fff" stroke="#4a8050" stroke-width="1.200"/><path d="M8 4v8M4 8h8" stroke="#4a8050" stroke-width="1.500"/></svg></div>
            <div><svg viewBox="0 0 16 16"><path d="M8 2.500 14.500 13h-13z" fill="#d3d4d5" stroke="#bdbfc0"/></svg></div>
            <div><svg viewBox="0 0 16 16"><path d="M1.500 5.500h13v5h-13z" fill="#fff" stroke="#dfd3d3"/><path d="M4 8h8" stroke="#dfd3d3" stroke-width="1.500"/></svg></div>
            <div><svg viewBox="0 0 16 16"><path d="M8 13.500 1.500 3h13z" fill="#d3d4d5" stroke="#bdbfc0"/></svg></div>
            <div><svg viewBox="0 0 16 16"><path d="M4.500 1.500h10v10h-10zM1.500 3.500v11h9" fill="none" stroke="#c3c5c6"/><path d="M10 10h5v5h-5z" fill="#e6e6dd" stroke="#c9c9bd"/></svg></div>
            <div><svg viewBox="0 0 16 16"><path d="M4.500 5c0-5 7-5 7 0v3" fill="none" stroke="#cccdce" stroke-width="2"/><rect x="2.500" y="7.500" width="11" height="7" rx="1" fill="#dbd9cf" stroke="#c8c6bb"/></svg></div>
          </div>
        </div>
        <div class="mt-[5px] w-[479px] h-px bg-[#8f9193]"></div>
        <div class="mt-[8px] h-[28px] flex items-center">
          <span class="w-[74px]">Color</span>
          <div class="w-[384px] h-[28px] rounded-[3px] border border-[#b4b6b8] bg-linear-to-b from-[#fcfcfc] to-[#eeeff0] px-[4px] py-[5px]"><div class="h-[16px] rounded-[3px] bg-[#729b6f]"></div></div>
          <div class="w-[12px] h-[28px] flex items-center justify-center rounded-[3px] border border-[#b4b6b8] bg-linear-to-b from-[#fcfcfc] to-[#eeeff0]"><svg class="w-[10px] h-[20px] shrink-0"><use href="#down"/></svg></div>
        </div>
        <div class="mt-[7px] h-[29px] flex items-center">
          <span class="w-[75px]">Opacidad</span>
          <div class="w-[256px] flex items-center -mt-[2px]"><div class="h-[5px] w-[242px] rounded-l-[2px] bg-[#5cbdf0] border border-[#3a87b4]"></div><div class="size-[14px] rounded-[3px] border border-[#b0b2b4] bg-white"></div></div>
          <div class="ml-[3px] w-[100px] h-[28px] flex rounded-[3px] border border-[#b4b6b8] bg-[#fcfcfc]"><span class="grow pl-[5px] self-center">100,0 %</span><svg class="w-[14px] h-[26px] border-l border-[#c3c5c7] bg-[#f4f5f6]" viewBox="0 0 14 26"><path d="M3.500 9.500h7L7 6z" fill="#b9bbbc"/><path d="M3.500 17h7L7 20.500z" fill="#6f7173"/></svg></div>
          <svg class="ml-[9px] w-[24px] h-[18px]" viewBox="0 0 24 18"><path d="M0 8.500 5 3v11z" fill="#888"/><path d="M5 1.500h12v15H5z" fill="#fff" stroke="#777" stroke-width="1.300"/><path d="M7.500 5H15M7.500 9H15M7.500 13H15" stroke="#444" stroke-width="1.500"/><path d="M16 12.500h7L19.500 16z" fill="#666"/></svg>
        </div>
        <div class="mt-[6px] h-[30px] flex items-center">
          <span class="w-[74px]">Unidad</span>
          <div class="w-[396px] h-[30px] flex items-center pl-[4px] pr-[5px] rounded-[3px] border border-[#b4b6b8] bg-linear-to-b from-[#fcfcfc] to-[#eeeff0]"><span class="grow">Milímetros</span><svg class="w-[12px] h-[24px]"><use href="#down"/></svg></div>
        </div>
        <div class="mt-[4px] w-[470px] h-px bg-[#8f9193]"></div>
        <div class="mt-[6px] h-[30px] flex items-center">
          <div class="w-[440px] h-[30px] flex items-center rounded-[3px] border border-[#b4b6b8] bg-[#fcfcfc]">
            <svg class="ml-[10px] size-[13px]" viewBox="0 0 13 13" fill="none" stroke="#7f8183"><circle cx="5" cy="5" r="4.400"/><path d="m8.200 8.200 4.300 4.300" stroke-width="1.300"/></svg>
            <span class="ml-[6px] grow">Favoritos</span>
            <svg class="w-[13px] h-[10px] mr-[8px]" viewBox="0 0 13 10"><path d="M0 5 4 0h9v10H4z" fill="#8d8f91"/><path d="m5.500 2.500 5 5M10.500 2.500l-5 5" stroke="#fff" stroke-width="1.100"/></svg>
            <svg class="w-[21px] h-[28px] border-l border-[#c3c5c7] bg-[#f6f7f8]" viewBox="0 0 21 28"><path d="M6 12.500h8l-4 4z" fill="#6f7173"/></svg>
          </div>
          <svg class="ml-[10px] size-[16px] overflow-visible" viewBox="0 0 24 24"><use href="#styles"/><text x="14" y="22" font-size="14" fill="#444">a</text></svg>
        </div>
        <!-- symbol list -->
        <div class="mt-[4px] w-[470px] h-[260px] flex border border-[#b4b6b9] bg-[#fcfcfc] overflow-hidden text-[12px] leading-[17px]">
          <div class="grow pl-[2px] pt-[19px] grid grid-cols-[repeat(4,101px)] grid-rows-[123px_100px_90px] text-center [&>div]:flex [&>div]:flex-col [&>div]:items-center [&>div]:gap-[13px] [&_svg]:w-[66px] [&_svg]:h-[57px] [&_svg]:shrink-0">
            <div><svg viewBox="0 0 66 57"><rect x="2" y="2" width="62" height="52.500" fill="url(#plasma)" stroke="#2e2833" stroke-width="1.500"/></svg><span>gradient<br>plasma</span></div>
            <div><svg viewBox="0 0 66 57"><rect x="2.500" y="2.500" width="61" height="52" fill="#969696" stroke="#aeaeae"/></svg><span>gray 3 fill</span></div>
            <div><svg viewBox="0 0 66 57"><defs><pattern id="h1" width="8.900" height="8.900" patternUnits="userSpaceOnUse"><path d="M-1 9.900 9.900-1M-1 1 1-1M7.900 9.900l2-2" stroke="#111" stroke-width="1.300"/></pattern><pattern id="h2" width="8.900" height="8.900" patternUnits="userSpaceOnUse"><path d="M-1-1 9.900 9.900M7.900-1l2 2M-1 7.900l2 2" stroke="#111" stroke-width="1.300"/></pattern><pattern id="h3" width="10" height="10" patternUnits="userSpaceOnUse"><path d="M0 0l10 10M0 10 10 0" stroke="#111" stroke-width="1.300"/></pattern></defs><rect x="2" y="2" width="61.500" height="52.500" fill="url(#h1)" stroke="#111" stroke-width="2"/></svg><span>hashed black /</span></div>
            <div><svg viewBox="0 0 66 57"><rect x="2" y="2" width="61.500" height="52.500" fill="url(#h2)" stroke="#111" stroke-width="2"/></svg><span>hashed black \</span></div>
            <div><svg viewBox="0 0 66 57"><rect x="2" y="2" width="61.500" height="52.500" fill="url(#h3)" stroke="#111" stroke-width="2"/></svg><span>hashed black X</span></div>
            <div><svg viewBox="0 0 66 57"><rect x="2.500" y="2.500" width="61" height="52" rx="1" fill="none" stroke="#377eb8" stroke-width="3.500"/></svg><span>outline blue</span></div>
            <div><svg viewBox="0 0 66 57"><rect x="2.500" y="2.500" width="61" height="52" rx="1" fill="none" stroke="#4daf4a" stroke-width="3.500"/></svg><span>outline green</span></div>
            <div><svg viewBox="0 0 66 57"><rect x="2.500" y="2.500" width="61" height="52" rx="1" fill="none" stroke="#e41a1c" stroke-width="3.500"/></svg><span>outline red</span></div>
            <div class="pt-[3px]"><svg viewBox="0 0 66 57"><path d="M3 4.500h62V57M3 4v53" fill="none" stroke="#999" stroke-width="1.500"/><g stroke="#555" stroke-width=".5"><circle cx="3" cy="4.500" r="4" fill="#4daf4a"/><circle cx="3" cy="10" r="4" fill="#e41a1c"/><circle cx="20" cy="4.500" r="4" fill="#e41a1c"/><circle cx="37" cy="4.500" r="4" fill="#4daf4a"/><circle cx="54" cy="4.500" r="4" fill="#e41a1c"/><circle cx="64" cy="11.500" r="4" fill="#4daf4a"/></g></svg></div>
            <div class="pt-[3px]"><svg viewBox="0 0 66 57"><rect x="3" y="5" width="61" height="52" fill="#fff" stroke="#222" stroke-width="1.500"/><path d="M11 6h53M7 12h57" stroke="#222" stroke-width="1.500" stroke-dasharray="1.500 7.500"/></svg></div>
            <div class="pt-[3px]"><svg viewBox="0 0 66 57"><rect x="2.500" y="5" width="61" height="52" fill="#fdbf5b" stroke="#f47c33" stroke-width="1.500"/><path d="M7 5h9l-4.500 8zM25 5h9l-4.500 8zM43 5h9l-4.500 8z" fill="#ff6414"/></svg></div>
            <div class="pt-[3px]"><svg viewBox="0 0 66 57"><rect x="2.500" y="5" width="61" height="52" fill="#377eb8" stroke="#2a6496"/></svg></div>
          </div>
          <div class="w-[15px] shrink-0 flex flex-col border-l border-[#b4b6b9] bg-[#e6e7e8]">
            <svg class="w-[14px] h-[14px] border-b border-[#b4b6b9] bg-[#fafafa]" viewBox="0 0 14 14"><path d="M3.500 9h7L7 5z" fill="#6f7173"/></svg>
            <div class="h-[129px] border-b border-[#b4b6b9] bg-linear-to-r from-white to-[#f1f2f3]"></div>
            <div class="grow"></div>
            <svg class="w-[14px] h-[14px] border-t border-[#b4b6b9] bg-[#fafafa]" viewBox="0 0 14 14"><path d="M3.500 5h7L7 9z" fill="#6f7173"/></svg>
          </div>
        </div>
        <div class="mt-[6px] w-[470px] h-[30px] flex items-center">
          <div class="w-[24px] h-[24px] flex items-center justify-center rounded-[3px] border border-[#b6b8ba] bg-[#dcddde]"><svg class="size-[14px]" viewBox="0 0 14 14"><path d="M.5.5h13v13H.5z" fill="#7ea7d8" stroke="#6d96c5"/><path d="M2.500 2.500h2v2h-2zM6 2.500h2v2H6zM9.500 2.500h2v2h-2zM2.500 6h2v2h-2zM6 6h2v2H6zM9.500 6h2v2h-2zM2.500 9.500h2v2h-2zM6 9.500h2v2H6zM9.500 9.500h2v2h-2z" fill="#fff"/></svg></div>
          <svg class="ml-[5px] size-[14px]" viewBox="0 0 14 14"><path d="M.5.5h13v13H.5z" fill="#e9f1fa" stroke="#8fb2dd"/><path d="M.5.500h13v3H.5z" fill="#7ea7d8"/><path d="M2.500 6h3M2.500 8.500h3M2.500 11h3M7 6h5M7 8.500h5M7 11h5" stroke="#8fb2dd"/></svg>
          <div class="grow"></div>
          <div class="w-[127px] h-[30px] flex items-center justify-center rounded-[3px] border border-[#b4b6b8] bg-linear-to-b from-[#fcfcfc] to-[#eeeff0]">Guardar símbolo</div>
          <div class="ml-[6px] w-[89px] h-[30px] flex items-center justify-between pl-[3px] pr-px rounded-[3px] border border-[#b4b6b8] bg-linear-to-b from-[#fcfcfc] to-[#eeeff0]">Avanzado<svg class="w-[12px] h-[18px]" viewBox="0 0 12 24"><use href="#down"/></svg></div>
        </div>
        <div class="mt-[19px] h-[28px] flex items-center font-bold"><svg class="ml-[4px] w-[9px] h-[11px]" viewBox="0 0 9 11"><path d="M.5 0 8 5.500.5 11z" fill="#3a3c3e"/></svg><span class="ml-[9px]">Representación de capas</span></div>
        <div class="mt-[2px] w-[479px] h-[30px] flex items-center">
          <div class="size-[24px] flex items-center justify-center rounded-[3px] border border-[#b4b6b8] bg-linear-to-b from-[#fcfcfc] to-[#eeeff0]"><svg class="size-[15px] shrink-0" viewBox="0 0 24 24"><use href="#undo" fill="#e67c3b"/></svg></div>
          <div class="ml-[6px] size-[24px] flex items-center justify-center rounded-[3px] border border-[#b4b6b8] bg-linear-to-b from-[#fcfcfc] to-[#eeeff0]"><svg class="size-[15px] shrink-0 -scale-x-100" viewBox="0 0 24 24"><use href="#undo" fill="#76aa7c"/></svg></div>
          <div class="grow"></div>
          <span class="size-[14px] border border-[#a6a8aa] bg-white"><svg class="size-[13px]"><use href="#tick"/></svg></span>
          <span class="ml-[5px] w-[159px]">Actualización en vivo</span>
          <div class="w-[80px] h-[30px] flex items-center pl-[5px] rounded-[3px] border border-[#b4b6b8] bg-linear-to-b from-[#fcfcfc] to-[#eeeff0]"><svg class="w-[16px] h-[18px] shrink-0" viewBox="0 0 16 18"><path d="m1 9 3-1 2 4C8 6 11 2 15 1c-4 5-6 9-8 15H5z" fill="#57734a" stroke="#3f5a34" stroke-width=".7"/></svg><span class="[&_u]:underline [&_u]:decoration-1 [&_u]:underline-offset-[3px]"><u>A</u>plicar</span></div>
        </div>
      </div>
    </div>
    <div class="mt-[4px] h-[32px] flex items-start border-t border-[#b4b6b9]">
      <div class="-mt-px w-[129px] h-[32px] flex items-center justify-center pt-[2px] pr-px rounded-b-[3px] border border-t-0 border-[#b4b6b9] bg-linear-to-b from-[#f1f2f3] to-[#f8f9fb]">Estilo de capas</div>
      <div class="w-[262px] h-[29px] flex items-center justify-center rounded-b-[3px] border border-t-0 border-l-0 border-[#b4b6b9] bg-[#dcddde]">Caja de herramientas de Procesos</div>
    </div>
  </section>
</main>

<!-- status bar -->
<footer class="h-[36px] shrink-0 flex items-center pl-[4px] text-[12px]">
  <div class="w-[358px] h-[30px] flex items-center rounded-[3px] border border-[#b4b6b8] bg-[#fcfcfc] text-[15px] text-[#929496]"><svg class="ml-[8px] size-[13px]" viewBox="0 0 13 13" fill="none" stroke="#7f8183"><circle cx="5" cy="5" r="4.400"/><path d="m8.200 8.200 4.300 4.300" stroke-width="1.300"/></svg><span class="ml-[7px]">Escriba para localizar (Ctrl+K)</span></div>
  <span class="ml-[604px] w-[73px] text-[12.500px]">Coordenada</span>
  <div class="w-[103px] h-[26px] flex items-center justify-center rounded-[3px] border border-[#b4b6b8] bg-[#fcfcfc]">-60.602,-29.766</div>
  <svg class="ml-[3px] size-[16px]" viewBox="0 0 16 16"><path d="M2 2c3-2 6 1 8 4l4 6c1 3-3 4-6 3S2 8 2 2z" fill="#ddd" stroke="#222"/><path d="m2 7 6-5M4 9l7-5M6 3l4 7M9 1l1 5M15 1l-3 3" stroke="#222" stroke-width="1.300"/><circle cx="10" cy="10.500" r="2" fill="#fff" stroke="#222"/></svg>
  <span class="ml-[14px] w-[38px]">Escala</span>
  <div class="w-[104px] h-[30px] flex items-center rounded-[3px] border border-[#b4b6b8] bg-[#fcfcfc]"><span class="grow pl-[3px]">1:2228381</span><svg class="w-[20px] h-[28px] border-l border-[#c3c5c7] bg-[#f6f7f8]" viewBox="0 0 20 28"><path d="M5.500 12.500h8l-4 4z" fill="#6f7173"/></svg></div>
  <svg class="ml-[11px] w-[14px] h-[16px]" viewBox="0 0 14 16"><path d="M3 8V5c0-5 8-5 8 0v3" fill="none" stroke="#6d6f71" stroke-width="1.700"/><rect x="1" y="7" width="12" height="8.500" rx="1" fill="#5b5d5f"/></svg>
  <span class="ml-[8px] w-[75px]">Amplificador</span>
  <div class="w-[99px] h-[29px] flex rounded-[3px] border border-[#b4b6b8] bg-[#fcfcfc]"><span class="grow pl-[4px] self-center">100%</span><svg class="w-[14px] h-[27px] border-l border-[#c3c5c7] bg-[#f6f7f8]" viewBox="0 0 14 27"><path d="M3.500 10h7L7 6.500zM3.500 18h7L7 21.500z" fill="#6f7173"/></svg></div>
  <span class="ml-[9px] w-[59px]">Rotación</span>
  <div class="w-[95px] h-[28px] flex rounded-[3px] border border-[#b4b6b8] bg-[#fcfcfc]"><span class="grow pl-[4px] self-center">0,0 °</span><svg class="w-[14px] h-[26px] border-l border-[#c3c5c7] bg-[#f6f7f8]" viewBox="0 0 14 26"><path d="M3.500 9.500h7L7 6zM3.500 17h7L7 20.500z" fill="#6f7173"/></svg></div>
  <span class="ml-[6px] size-[14px] border border-[#a6a8aa] bg-white"><svg class="size-[13px]"><use href="#tick"/></svg></span>
  <span class="ml-[5px] w-[84px]">Representar</span>
  <svg class="size-[15px]" viewBox="0 0 15 15" fill="none" stroke="#555"><circle cx="7.500" cy="7.500" r="6" fill="#c9cacb"/><path d="M0 7.500h15M7.500 1v13M2.500 4.500h10M2.500 10.500h10"/><ellipse cx="7.500" cy="7.500" rx="3.200" ry="6"/></svg>
  <span class="ml-[3px] w-[82px]">EPSG:4326</span>
  <svg class="w-[18px] h-[16px]" viewBox="0 0 18 16"><rect x="1" y="1" width="16" height="11.500" rx="5" fill="#595b5d"/><path d="M9 11h6v4.500z" fill="#595b5d"/><path d="M4.500 6.700h2M8 6.700h2M11.500 6.700h2" stroke="#fff" stroke-width="1.600"/></svg>
</footer>
</body>
</html>
